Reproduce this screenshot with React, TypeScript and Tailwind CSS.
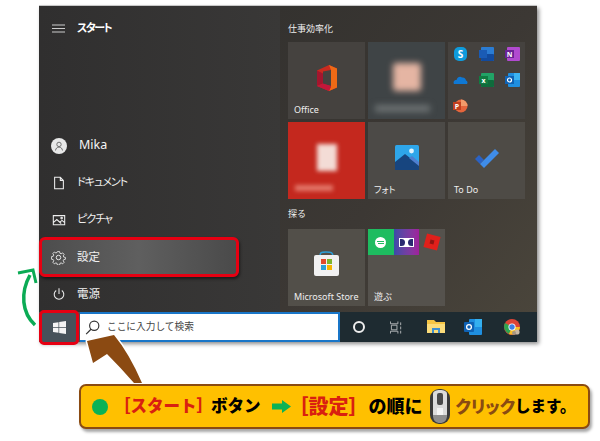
const cjk = "font-['Noto_Sans','Noto_Sans_CJK_JP',sans-serif]";
const palt = "[font-feature-settings:'palt']";

function Tile({ label, bg, children }: { label?: string; bg: string; children?: React.ReactNode }) {
  return (
    <div className={`relative flex h-[77px] w-[77px] items-center justify-center ${bg}`}>
      {children}
      {label && <span className={`absolute bottom-[5px] left-[6px] text-[9px] leading-none text-[#eeeeee] ${palt}`}>{label}</span>}
    </div>
  );
}

function NavRow({ icon, label, labelClass }: { icon: React.ReactNode; label: string; labelClass: string }) {
  return (
    <div className={`flex h-[37px] items-center gap-[11px] pl-[12px] text-[#f0f0f0] ${palt}`}>
      <div className="flex w-[15px] justify-center">{icon}</div>
      <span className={labelClass}>{label}</span>
    </div>
  );
}

const iconProps = { width: 14, height: 14, viewBox: '0 0 16 16', fill: 'none', stroke: '#eeeeee', strokeWidth: 1.2 };

function AppGrid() {
  return (
    <div className="grid grid-cols-3 gap-x-[11px] gap-y-[12px] pb-[1px]">
      <svg width="15" height="14" viewBox="0 0 15 14">
        <rect x="1" width="13" height="14" rx="5" fill="#0f9bdc" />
        <text x="7.500" y="11" textAnchor="middle" fontSize="10" fontWeight="700" fill="#ffffff">S</text>
      </svg>
      <svg width="15" height="14" viewBox="0 0 15 14">
        <rect x="2" width="13" height="14" rx="1" fill="#2b7cd3" />
        <rect x="2" y="7" width="13" height="7" rx="1" fill="#124a9e" />
        <rect y="3" width="8" height="8" fill="#1a5bb5" />
      </svg>
      <svg width="15" height="14" viewBox="0 0 15 14">
        <rect x="2" width="13" height="14" rx="1" fill="#b14ad0" />
        <rect y="3" width="9" height="8" fill="#6a2295" />
        <text x="4.500" y="10" textAnchor="middle" fontSize="7" fontWeight="700" fill="#ffffff">N</text>
      </svg>
      <svg width="15" height="14" viewBox="0 0 15 14">
        <path d="M1 11c-1-2 0-4 2.500-4C4.500 4 7 3 9 4.500c2-.5 4 1 4 3 1.500.3 2 2.500 1 3.500z" fill="#0f78d4" />
      </svg>
      <svg width="15" height="14" viewBox="0 0 15 14">
        <rect x="2" width="13" height="14" rx="1" fill="#21a366" />
        <rect x="2" y="7" width="13" height="7" rx="1" fill="#0f6b3c" />
        <rect y="3" width="9" height="8" fill="#107c41" />
        <text x="4.500" y="10" textAnchor="middle" fontSize="7" fontWeight="700" fill="#ffffff">x</text>
      </svg>
      <svg width="15" height="14" viewBox="0 0 15 14">
        <rect x="3" width="12" height="14" rx="1" fill="#1f8fe0" />
        <rect x="9" width="6" height="7" fill="#3bb4f2" />
        <rect y="3" width="9" height="8" fill="#0f62b4" />
        <circle cx="4.500" cy="7" r="2" fill="none" stroke="#ffffff" strokeWidth="1.200" />
      </svg>
      <svg width="15" height="14" viewBox="0 0 15 14">
        <circle cx="8" cy="7" r="6.500" fill="#e5653c" />
        <path d="M8 7V.5A6.500 6.500 0 0 1 14.500 7z" fill="#f29a6a" />
        <rect y="3" width="8" height="8" fill="#c2401f" />
        <text x="4" y="10" textAnchor="middle" fontSize="7" fontWeight="700" fill="#ffffff">P</text>
      </svg>
    </div>
  );
}

export default function App() {
  return (
    <div className={`relative h-[441px] w-[600px] overflow-hidden bg-white ${cjk}`}>
      <div className="pt-[5px] pl-[39px]">
        {/* Start menu */}
        <div className="h-[336px] w-[498px] border-t border-[#c8c8c8] shadow-[2px_3px_4px_rgba(0,0,0,0.45)]">
          <div className="flex h-[306px]">
            {/* Left rail */}
            <div className="flex w-[241px] flex-col justify-between bg-gradient-to-r from-[#302f2f] to-[#393837]">
              <div className="flex h-[44px] items-center gap-[12px] pl-[13px]">
                <svg width="13" height="9" viewBox="0 0 13 9" stroke="#cccccc" strokeWidth="1">
                  <path d="M0 1h13M0 4.500h13M0 8h13" />
                </svg>
                <span className={`text-[11px] font-bold tracking-[-1.500px] text-white ${palt}`}>スタート</span>
              </div>
              <div>
                <div className="flex h-[37px] items-center gap-[12px] pl-[12px] text-[12.500px] text-[#f4f4f4]">
                  <div className="flex h-[16px] w-[16px] items-center justify-center rounded-full bg-[#e8e8e8]">
                    <svg width="10" height="10" viewBox="0 0 10 10" fill="none" stroke="#666666" strokeWidth="0.900">
                      <circle cx="5" cy="3.400" r="2.200" />
                      <path d="M1.500 9.500c.3-2.200 1.700-3.400 3.500-3.400s3.200 1.200 3.500 3.400" />
                    </svg>
                  </div>
                  <span>Mika</span>
                </div>
                <NavRow
                  label="ドキュメント"
                  labelClass="text-[11px] tracking-[-1px]"
                  icon={
                    <svg {...iconProps}>
                      <path d="M3 1.500h6.500L13 5v9.500H3zM9.500 1.500V5H13" />
                    </svg>
                  }
                />
                <NavRow
                  label="ピクチャ"
                  labelClass="text-[11px] tracking-[-1px]"
                  icon={
                    <svg {...iconProps}>
                      <path d="M1.500 3h13v10.500h-13zM1.500 11l4-3.500 5 4.500M9 10.500l2.500-2 3 2.500" />
                      <circle cx="11" cy="5.800" r="0.900" />
                    </svg>
                  }
                />
                {/* 設定 row is drawn by the highlight overlay */}
                <div className="h-[37px]" />
                <NavRow
                  label="電源"
                  labelClass="text-[11.500px]"
                  icon={
                    <svg {...iconProps} strokeWidth={1.2}>
                      <path d="M8 1.500v6.500M4.800 4a5.500 5.500 0 1 0 6.400 0" />
                    </svg>
                  }
                />
              </div>
            </div>

            {/* Tiles */}
            <div className="flex-1 bg-gradient-to-br from-[#34322f] via-[#3c3834] to-[#4a453b] pl-[8px] text-[#eeeeee]">
              <div className="flex h-[36px] items-end pb-[4px] text-[9px] leading-none">
                <span className="mb-[5px]">仕事効率化</span>
              </div>
              <div className="grid w-[237px] grid-cols-[77px_77px_77px] gap-x-[3px] gap-y-[3px]">
                <Tile label="Office" bg="bg-[#45423f]">
                  <svg className="mb-[6px]" width="22" height="28" viewBox="0 0 22 28">
                    <path d="M1 6.500 13 1l8 3.500v19L13 27 1 22z" fill="#c92a1f" />
                    <path d="M13 1l8 3.500v19L13 27l2-4V6z" fill="#ee6a16" />
                    <path d="M1 22V6.500L7 9.500v10z" fill="#a3162e" />
                    <path d="M7 7.500 15 6v16l-8-2z" fill="#45423f" />
                    <path d="m1 22 6-2.500 8 2.500-2 5z" fill="#c4173a" />
                  </svg>
                </Tile>
                <Tile bg="bg-[#3f4446]">
                  <div className="mb-[8px] h-[28px] w-[28px] rounded-[3px] bg-[#e5b5a3] blur-[3px]" />
                  <div className="absolute bottom-[7px] left-[7px] h-[7px] w-[55px] bg-[#6d7273] blur-[3px]" />
                </Tile>
                <Tile bg="bg-[#45423f]">
                  <AppGrid />
                </Tile>
                <Tile bg="bg-[#c4281e]">
                  <div className="mb-[6px] h-[27px] w-[20px] bg-[#f3dcd6] blur-[2px]" />
                  <div className="absolute bottom-[8px] left-[7px] h-[6px] w-[38px] bg-[#e3776a] blur-[2px]" />
                </Tile>
                <Tile label="フォト" bg="bg-[#4c4a47]">
                  <svg className="mb-[6px]" width="24" height="25" viewBox="0 0 24 25">
                    <rect width="24" height="25" rx="1.500" fill="#2ea6ea" />
                    <circle cx="16.500" cy="6" r="2.400" fill="#dff3fd" />
                    <path d="M0 17 10 9l14 11v5H0z" fill="#17457f" />
                    <path d="M14 13l3-2 7 6v4z" fill="#4f7fd0" />
                  </svg>
                </Tile>
                <Tile label="To Do" bg="bg-[#4e4b46]">
                  <svg className="mb-[5px]" width="26" height="21" viewBox="0 0 26 21">
                    <path d="M1 11l4-4 5 5-4 4z" fill="#2a62c4" />
                    <path d="M6 16 21 1l4 4L10 20z" fill="#3f8ce8" />
                  </svg>
                </Tile>
              </div>
              <div className="flex h-[30px] items-end pb-[9px] text-[9px]">探る</div>
              <div className="flex gap-x-[3px]">
                <Tile label="Microsoft Store" bg="bg-[#524f49]">
                  <svg className="mb-[9px]" width="27" height="27" viewBox="0 0 27 27">
                    <path d="M7 7c0-5 1-5 6-5s7 0 7 5" fill="none" stroke="#2c9fd8" strokeWidth="1.600" />
                    <rect x="1" y="5" width="25" height="21" rx="2" fill="#f1f1f1" />
                    <rect x="8" y="9" width="5" height="5" fill="#e0492d" />
                    <rect x="14" y="9" width="5" height="5" fill="#7db42c" />
                    <rect x="8" y="15" width="5" height="5" fill="#2c9fd8" />
                    <rect x="14" y="15" width="5" height="5" fill="#f4b400" />
                  </svg>
                </Tile>
                <div className="relative h-[77px] w-[77px] bg-[#55524d]">
                  <div className="flex">
                    <div className="flex h-[26px] w-[26px] items-center justify-center bg-[#1ebc60]">
                      <div className="flex h-[11px] w-[11px] flex-col items-center justify-center gap-[1px] rounded-full bg-white">
                        <div className="h-[1px] w-[7px] bg-[#1ebc60]" />
                        <div className="h-[1px] w-[6px] bg-[#1ebc60]" />
                      </div>
                    </div>
                    <div className="flex h-[26px] w-[26px] items-center justify-center bg-gradient-to-r from-[#3a4aa8] to-[#a01f9c]">
                      <div className="flex h-[9px] w-[15px] justify-between bg-white px-[1px] py-[1px]">
                        <div className="w-[5px] rounded-r-full bg-[#2a2a70]" />
                        <div className="w-[5px] rounded-l-full bg-[#2a2a70]" />
                      </div>
                    </div>
                    <div className="flex h-[26px] w-[26px] items-center justify-center">
                      <div className="flex h-[14px] w-[14px] rotate-[15deg] items-center justify-center bg-[#e0201b]">
                        <div className="h-[4px] w-[4px] bg-[#8f1512]" />
                      </div>
                    </div>
                  </div>
                  <span className="absolute bottom-[5px] left-[6px] text-[9px] leading-none text-[#eeeeee]">遊ぶ</span>
                </div>
              </div>
            </div>
          </div>

          {/* Taskbar */}
          <div className="flex h-[30px] items-center bg-[#1e2b31]">
            <div className="flex h-full w-[41px] items-center justify-center bg-[#47525a]">
              <svg width="13" height="13" viewBox="0 0 13 13" fill="#f4f4f4">
                <path d="M0 2l5.500-.8v5H0zM6.200 1.100 13 0v6.200H6.200zM0 6.900h5.500v4.900L0 11zM6.200 6.900H13V13l-6.800-1z" />
              </svg>
            </div>
            <div className="flex h-full w-[260px] items-center gap-[7px] border-y-2 border-r-2 border-[#1976c8] bg-white pl-[5px] text-[9.700px] text-[#444444]">
              <svg width="15" height="15" viewBox="0 0 13 13" fill="none" stroke="#333333" strokeWidth="1">
                <circle cx="8" cy="5" r="4" />
                <path d="M5.200 8 1 12.300" />
              </svg>
              <span>ここに入力して検索</span>
            </div>
            <div className="flex flex-1 items-center pl-[13px]">
              <div className="h-[12px] w-[12px] rounded-full border-2 border-[#eeeeee]" />
              <svg className="ml-[25px]" width="13" height="13" viewBox="0 0 14 13" fill="none" stroke="#b5b9bb" strokeWidth="1">
                <path d="M.5 0v2.500h8V0M.5 13v-2.500h8V13M1.500 4h6v5h-6zM11.500 1v3M11.500 5.500v3M11.500 10v3" />
              </svg>
              <svg className="ml-[24px]" width="18" height="16" viewBox="0 0 18 16">
                <path d="M0 1h7l2 2h9v11H0z" fill="#f5c544" />
                <path d="M0 5h18v9H0z" fill="#fbdc7a" />
                <path d="M5 9h8v5H5z" fill="#3d8fd0" />
                <path d="M7 11h4v3H7z" fill="#fbdc7a" />
              </svg>
              <svg className="ml-[19px]" width="18" height="16" viewBox="0 0 18 16">
                <rect x="5" width="13" height="16" rx="1" fill="#1f8fe0" />
                <rect x="11" y="0" width="7" height="8" fill="#34b0ef" />
                <rect y="3" width="10" height="10" rx="1" fill="#0f62b4" />
                <circle cx="5" cy="8" r="2.400" fill="none" stroke="#ffffff" strokeWidth="1.300" />
              </svg>
              <svg className="ml-[21px]" width="19" height="19" viewBox="0 0 19 19">
                <circle cx="9" cy="9" r="8" fill="#dc4437" />
                <path d="M9 9 2 5a8 8 0 0 0 4 11z" fill="#2fa44f" />
                <path d="M9 9h8a8 8 0 0 1-11 7z" fill="#f6c026" />
                <circle cx="9" cy="9" r="3.600" fill="#ffffff" />
                <circle cx="9" cy="9" r="2.700" fill="#3d7fe6" />
                <circle cx="14" cy="14" r="2.600" fill="#c9b8a4" />
                <circle cx="11" cy="15" r="2" fill="#a8957f" />
              </svg>
            </div>
          </div>
        </div>
      </div>

      {/* 設定 highlight */}
      <div className="absolute top-[237px] left-[39px] flex h-[40px] w-[200px] items-center gap-[11px] rounded-[6px] border-[3px] border-[#e60012] bg-gradient-to-r from-[#4d4d4d] via-[#5f5f5f] to-[#4a4a4a] pl-[9px] text-[11.500px] text-[#f0f0f0] shadow-[1px_2px_3px_rgba(0,0,0,0.5)]">
        <svg width="15" height="15" viewBox="0 0 16 16" fill="none" stroke="#eeeeee" strokeWidth="1">
          <circle cx="8" cy="8" r="2.400" />
          <path d="M6.700 1h2.600l.4 2 1.400.6 1.800-1.100 1.800 1.800-1.100 1.800.6 1.400 2 .4v2.200l-2 .4-.6 1.400 1.100 1.800-1.800 1.800-1.800-1.100-1.400.6-.4 2H6.700l-.4-2-1.400-.6-1.800 1.100-1.800-1.800 1.100-1.800-.6-1.400-2-.4V6.900l2-.4.6-1.400-1.100-1.800 1.800-1.800 1.800 1.100 1.400-.6z" transform="translate(.8 .8) scale(.9)" />
        </svg>
        <span>設定</span>
      </div>

      {/* Start button highlight */}
      <div className="absolute top-[310px] left-[39px] h-[35px] w-[40px] rounded-[5px] border-[3px] border-[#e60012]" />

      {/* Green arrow */}
      <svg className="absolute top-[265px] left-[14px]" width="30" height="64" viewBox="0 0 30 64" fill="none">
        <path d="M21 60C8 48 6 28 16 10" stroke="#0bab55" strokeWidth="3.500" />
        <path d="M4 8 19 5l3 13" stroke="#0bab55" strokeWidth="3" />
      </svg>

      {/* Brown arrow */}
      <svg className="absolute top-[330px] left-[82px]" width="66" height="58" viewBox="0 0 66 58">
        <path
          d="M5 11 32 5Q47 23 60 53H52Q38 37 25 24L11 33z"
          fill="#8b4a12"
          stroke="#ffffff"
          strokeWidth="3"
          strokeLinejoin="round"
          paintOrder="stroke"
        />
      </svg>

      {/* Instruction callout */}
      <div className="absolute top-[384px] left-[79px] flex h-[45px] w-[511px] items-center rounded-[7px] border-[2px] border-[#8a4b12] bg-[#ffc000] pl-[11px] font-black text-black shadow-[2px_3px_3px_rgba(0,0,0,0.35)]">
        <div className="h-[16px] w-[16px] shrink-0 rounded-full bg-[#0bb255]" />
        <span className="ml-[6px] text-[16.500px] text-[#d92010]">［スタート］</span>
        <span className="-ml-[2px] text-[16.500px]">ボタン</span>
        <svg className="ml-[11px] shrink-0" width="19" height="13" viewBox="0 0 19 13">
          <path d="M0 3.500h10V0l9 6.500-9 6.500V9.500H0z" fill="#0bb255" />
        </svg>
        <span className="-ml-[2px] text-[20px] text-[#d92010]">［設定］</span>
        <span className="text-[18px]">の順に</span>
        <svg className="ml-[6px] shrink-0" width="22" height="37" viewBox="0 0 22 37">
          <rect x="1" y="1" width="20" height="35" rx="9" fill="#3a3a3a" />
          <path d="M4 6c0-3 3-4 7-4s7 1 7 4v20c0 4-3 6-7 6s-7-2-7-6z" fill="#dcdcdc" />
          <path d="M8 20h6v12H8z" fill="#f4f4f4" />
          <path d="M4 27h14c0 6-3 8-7 8s-7-2-7-8z" fill="#8e8e8e" />
          <rect x="8" y="5" width="6" height="12" rx="2" fill="#4a4a4a" />
        </svg>
        <span className={`ml-[5px] text-[17px] text-[#8a4b12] ${palt}`}>クリック</span>
        <span className="text-[15.500px]">します。</span>
      </div>
    </div>
  );
}
